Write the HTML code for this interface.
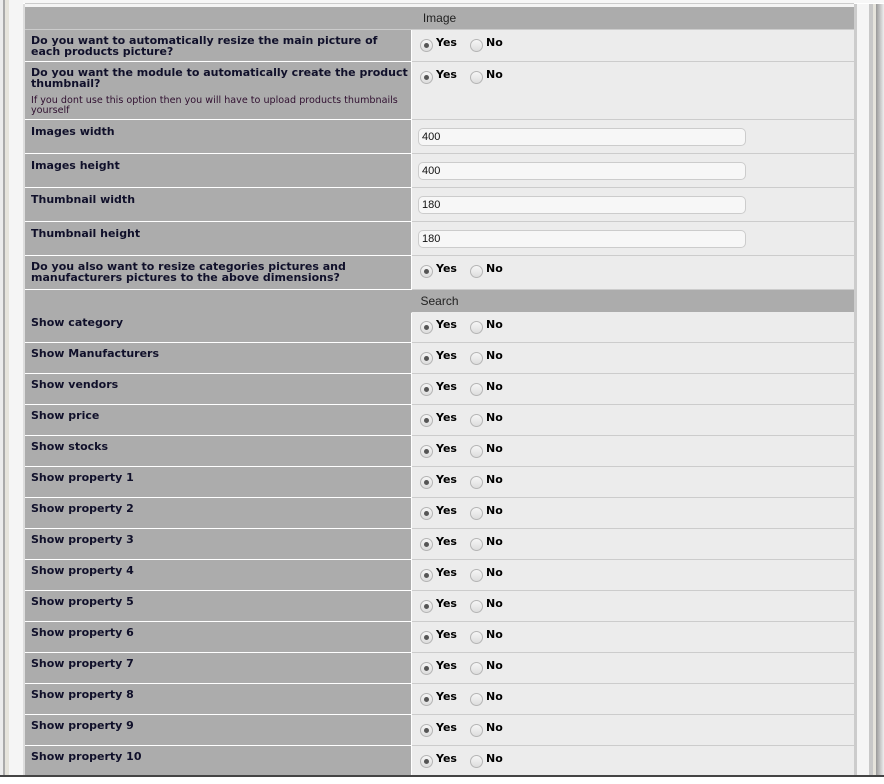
<!DOCTYPE html>
<html><head><style>
body{margin:0;width:884px;height:784px;background:#fff;position:relative;overflow:hidden;font-family:"DejaVu Sans",Verdana,sans-serif}
.a{position:absolute}
.row{position:absolute;left:25px;width:829px}
.l{position:absolute;left:0;top:0;width:386px;bottom:0;background:#acacac;border-bottom:1px solid #fff;box-sizing:border-box}
.v{position:absolute;left:387px;right:0;top:0;bottom:0;background:#ececec;border-bottom:1px solid #ccc;box-sizing:border-box}
.lt{position:absolute;left:6px;top:5px;font-size:11px;font-weight:bold;color:#10102a;line-height:11px;letter-spacing:0;white-space:nowrap}
.sm{font-size:9.6px;font-weight:normal;color:#301030;line-height:10px;margin-top:7px;letter-spacing:0}
.hd{position:absolute;left:0;width:829px;background:#acacac;border-bottom:1px solid #ccc;box-sizing:border-box;text-align:center;font:12px "Liberation Sans",Arial,sans-serif;color:#222}
.r{position:absolute;width:11px;height:11px;border-radius:50%;border:1px solid #b5b5b5;background:linear-gradient(#f6f6f6,#ddd)}
.r.on::after{content:"";position:absolute;left:3px;top:3px;width:5px;height:5px;border-radius:50%;background:#555}
.rl{position:absolute;font-size:11px;font-weight:bold;color:#000}
.in{position:absolute;left:6px;top:8px;width:328px;height:18px;border:1px solid #ccc;border-radius:5px;background:#f7f7f7;box-sizing:border-box;font:11px "Liberation Sans",Arial,sans-serif;line-height:16px;padding-left:3px;color:#111}
</style></head><body>
<div class="a" style="left:0;top:0;width:884px;height:3px;background:#f7f7f7"></div>
<div class="a" style="left:0;top:0;width:3px;height:777px;background:#ececec"></div>
<div class="a" style="left:3px;top:0;width:2px;height:777px;background:#aaa"></div>
<div class="a" style="left:5px;top:0;width:4px;height:777px;background:#e6e4dc"></div>
<div class="a" style="left:9px;top:0;width:14px;height:777px;background:#f5f5f5"></div>
<div class="a" style="left:23px;top:4px;width:2px;height:773px;background:#ddd"></div>
<div class="a" style="left:25px;top:3px;width:829px;height:4px;background:#f5f5f5;border-top:1px solid #ccc"></div>
<div class="a" style="left:854px;top:4px;width:3px;height:773px;background:#ccc"></div>
<div class="a" style="left:857px;top:4px;width:12px;height:773px;background:#f5f5f5"></div>
<div class="a" style="left:869px;top:4px;width:4px;height:773px;background:#c8c8c8"></div>
<div class="a" style="left:873px;top:4px;width:3px;height:773px;background:#e6e4dc"></div>
<div class="a" style="left:876px;top:4px;width:8px;height:773px;background:linear-gradient(90deg,#999,#eee)"></div>
<div class="a" style="left:0;top:775px;width:884px;height:2px;background:#444"></div>
<div class="a" style="left:0;top:777px;width:884px;height:7px;background:#fff"></div>
<div id="t" class="a" style="left:25px;top:0;width:829px;height:775px;overflow:hidden"></div>
<script>
var t=document.getElementById('t'),h='';
function hd(top,txt){h+='<div class="hd" style="top:'+top+'px;height:23px;line-height:22px">'+txt+'</div>';}
function radio(top,lab,extra){h+='<div class="row" style="left:0;top:'+top[0]+'px;height:'+top[1]+'px"><div class="l"><div class="lt">'+lab+(extra?'<div class="sm">'+extra+'</div>':'')+'</div></div><div class="v">'+
'<div class="r on" style="left:8px;top:9px"></div><div class="rl" style="left:24px;top:6px">Yes</div>'+
'<div class="r" style="left:58px;top:9px"></div><div class="rl" style="left:74px;top:6px">No</div></div></div>';}
function inp(top,lab,val){h+='<div class="row" style="left:0;top:'+top+'px;height:34px"><div class="l"><div class="lt" style="top:6px">'+lab+'</div></div><div class="v"><div class="in">'+val+'</div></div></div>';}
hd(7,'Image');
radio([30,32],'Do you want to automatically resize the main picture of<br>each products picture?');
radio([62,58],'Do you want the module to automatically create the product<br>thumbnail?','If you dont use this option then you will have to upload products thumbnails<br>yourself');
inp(120,'Images width','400');inp(154,'Images height','400');inp(188,'Thumbnail width','180');inp(222,'Thumbnail height','180');
radio([256,34],'Do you also want to resize categories pictures and<br>manufacturers pictures to the above dimensions?');
hd(290,'Search');
var L=['Show category','Show Manufacturers','Show vendors','Show price','Show stocks'];
for(var i=1;i<=10;i++)L.push('Show property '+i);
L.forEach(function(s,i){radio([312+31*i,31],s);});
t.innerHTML=h;
</script>
</body></html>
